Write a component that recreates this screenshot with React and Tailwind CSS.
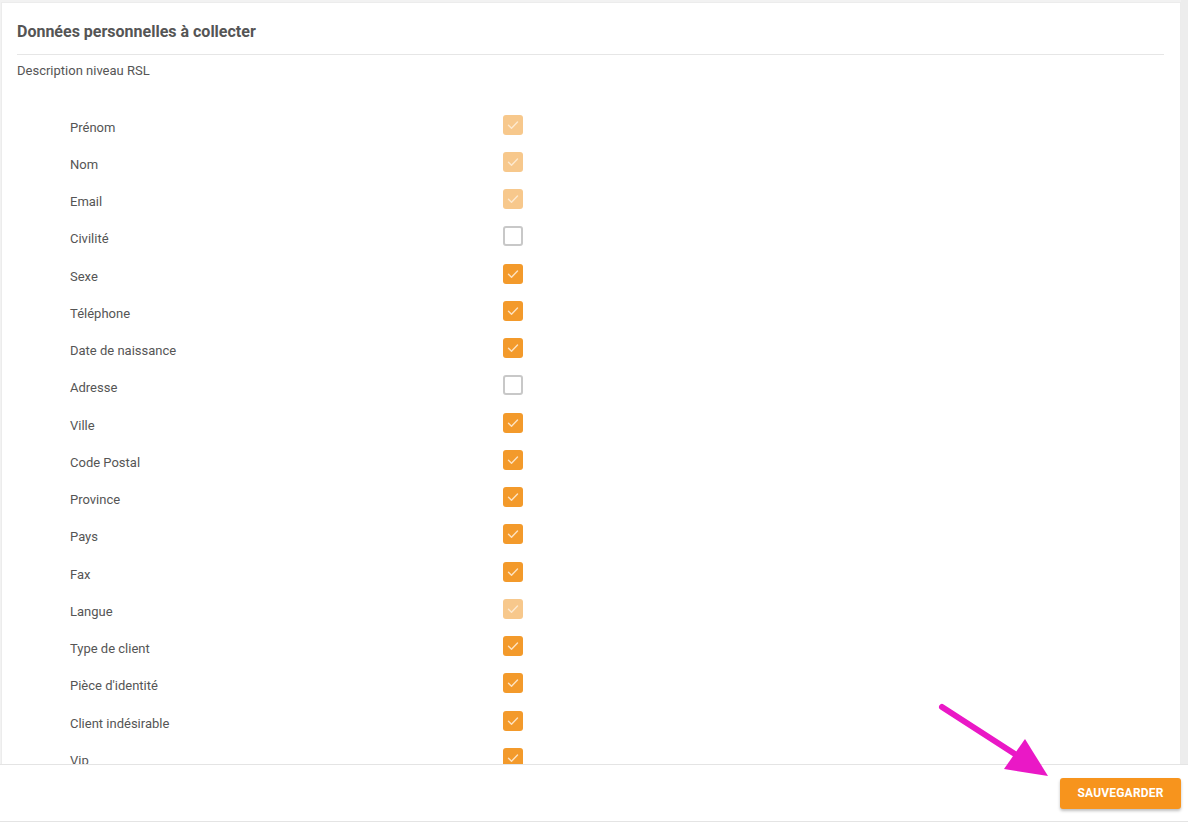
import React from "react";

const fields = [
  { label: "Prénom", state: "locked" },
  { label: "Nom", state: "locked" },
  { label: "Email", state: "locked" },
  { label: "Civilité", state: "off" },
  { label: "Sexe", state: "on" },
  { label: "Téléphone", state: "on" },
  { label: "Date de naissance", state: "on" },
  { label: "Adresse", state: "off" },
  { label: "Ville", state: "on" },
  { label: "Code Postal", state: "on" },
  { label: "Province", state: "on" },
  { label: "Pays", state: "on" },
  { label: "Fax", state: "on" },
  { label: "Langue", state: "locked" },
  { label: "Type de client", state: "on" },
  { label: "Pièce d'identité", state: "on" },
  { label: "Client indésirable", state: "on" },
  { label: "Vip", state: "on" },
];

const Check = ({ state }) => {
  if (state === "off") {
    return <span className="block w-[20px] h-[20px] rounded-[3px] border-2 border-[#c8c8c8] bg-white" />;
  }
  return (
    <span
      className={`flex items-center justify-center w-[20px] h-[20px] rounded-[3px] ${
        state === "locked" ? "bg-[#f7c88c]" : "bg-[#f39a2b]"
      }`}
    >
      <svg width="14" height="14" viewBox="0 0 14 14" fill="none">
        <path
          d="M2.5 7.2l3 3 6-6.2"
          stroke={state === "locked" ? "#fde9cf" : "#fde3c2"}
          strokeWidth="1.4"
          strokeLinecap="round"
          strokeLinejoin="round"
        />
      </svg>
    </span>
  );
};

const App = () => {
  return (
    <div className="relative h-[824px] w-[1188px] flex flex-col bg-white text-[#555] font-['Roboto',sans-serif] overflow-hidden">
      {/* Scroll area */}
      <div className="h-[764px] flex bg-[#f2f2f2] overflow-hidden">
        <div className="flex-1 pl-[1px] pt-[2px] overflow-hidden">
          <div className="bg-white border border-[#ececec] pl-[15px] pr-[16px] pt-[17px] min-h-[800px]">
            <h1 className="text-[16px] leading-[24px] font-bold text-[#555]">Données personnelles à collecter</h1>
            <div className="mt-[10px] border-t border-[#e6e6e6]" />
            <p className="mt-[6px] text-[13px] leading-[20px] text-[#555]">Description niveau RSL</p>
            <div className="mt-[25px] pl-[53px]">
              {fields.map((f) => (
                <div key={f.label} className="h-[37.25px] flex items-center">
                  <span className="w-[433px] text-[13px] leading-[20px] mt-[6px] text-[#555]">{f.label}</span>
                  <Check state={f.state} />
                </div>
              ))}
            </div>
          </div>
        </div>
        <div className="w-[7px] bg-[#ededed]" />
      </div>

      {/* Footer */}
      <div className="h-[58px] border-t border-[#e4e4e4] border-b flex items-center justify-end pr-[7px]">
        <button className="h-[31px] w-[121px] bg-[#f7941d] text-white text-[12px] font-bold tracking-[0.2px] rounded-[3px] shadow-[0_2px_3px_rgba(0,0,0,0.25)]">
          SAUVEGARDER
        </button>
      </div>

      {/* Annotation arrow */}
      <svg className="absolute left-0 top-0 pointer-events-none" width="1188" height="824">
        <line x1="942" y1="707" x2="1018" y2="756" stroke="#ea18c6" strokeWidth="6" strokeLinecap="round" />
        <polygon points="1048,776 1004,769 1025,739" fill="#ea18c6" />
      </svg>
    </div>
  );
};

export default App;
